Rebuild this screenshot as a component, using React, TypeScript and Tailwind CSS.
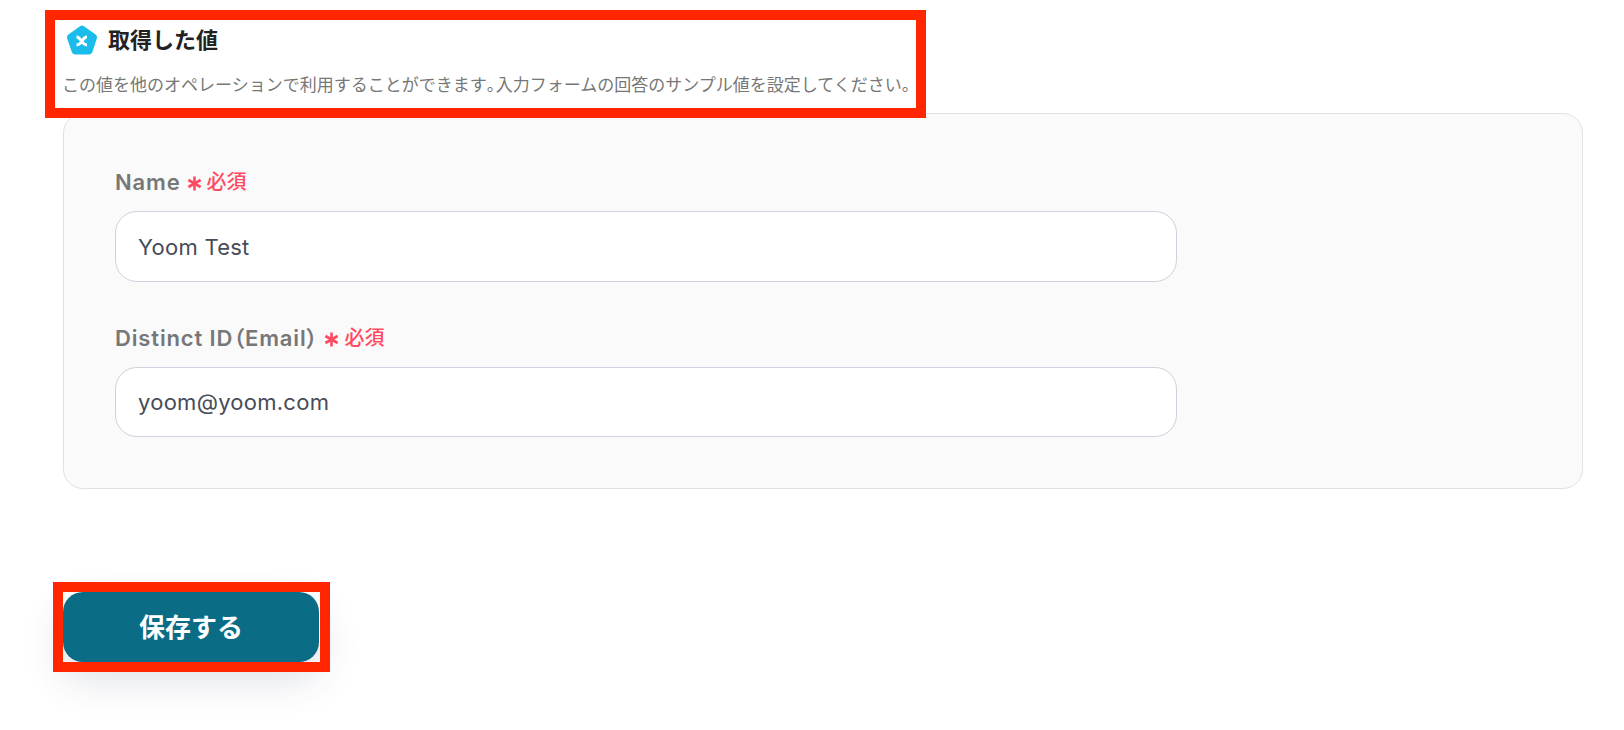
const font = "font-['Inter','Noto_Sans_CJK_JP',sans-serif]";

function RequiredMark() {
  return (
    <span className="ml-[6px] flex items-center tracking-normal text-[#ff4a62]">
      <svg width="15" height="15" viewBox="0 0 15 15" className="mt-[2px]" fill="none" stroke="currentColor" strokeWidth="2.6">
        <path d="M7.5 0.5V14.5M1.4 4L13.6 11M13.6 4L1.4 11" />
      </svg>
      <span className="ml-[5px] text-[20px] font-medium">必須</span>
    </span>
  );
}

function Field({ label, value, className }: { label: string; value: string; className: string }) {
  return (
    <div>
      <div className="flex h-[28px] items-center text-[22px] font-semibold leading-[28px] tracking-[0.85px] text-[#777777] [font-feature-settings:'palt']">
        <span>{label}</span>
        <RequiredMark />
      </div>
      <div className={`mt-[15px] flex w-[1062px] items-center rounded-[22px] border border-[#cfd1dc] bg-white pl-[22px] text-[22px] tracking-[0.26px] text-[#474c58] ${className}`}>
        {value}
      </div>
    </div>
  );
}

export default function App() {
  return (
    <div className={`relative h-[730px] w-full overflow-hidden bg-white pl-[63px] pr-[41px] pt-[20px] ${font}`}>
      {/* HEADING */}
      <div className="flex h-[40px] items-center pl-[3px]">
        <svg width="32" height="31" viewBox="0 0 32 31" className="mt-[1px]">
          <path d="M14 1.2a3.4 3.4 0 0 1 4 0l11.6 8.4a3.4 3.4 0 0 1 1.2 3.8l-4.4 13.6a3.4 3.4 0 0 1-3.2 2.4H9a3.4 3.4 0 0 1-3.2-2.4L1.2 13.4a3.4 3.4 0 0 1 1.2-3.8z" fill="#1abcec" />
          <path d="M10.5 12c2.5 0 3.5 1.7 5 4s3 4 5.5 4M21 12c-2.5 0-3.5 1.7-5 4s-3 4-5.5 4" stroke="#fff" strokeWidth="2.8" fill="none" />
        </svg>
        <h2 className="ml-[10px] text-[22px] font-bold text-[#222222]">取得した値</h2>
      </div>
      <p className="-ml-[1px] mt-[13px] whitespace-nowrap text-[17px] leading-[24px] text-[#777777]">
        この値を他のオペレーションで利用することができます<span className="tracking-[-8px]">。</span>入力フォームの回答のサンプル値を設定してください。
      </p>

      {/* FORM CARD */}
      <div className="mt-[16px] h-[376px] rounded-[20px] border border-[#e0e1e6] bg-[#fafafb] pl-[51px] pt-[54px]">
        <Field label="Name" value="Yoom Test" className="h-[71px] pt-[1px]" />
        <div className="mt-[42px]">
          <Field label="Distinct ID（Email）" value="yoom@yoom.com" className="h-[70px]" />
        </div>
      </div>

      {/* SAVE */}
      <button className="mt-[103px] flex h-[70px] w-[256px] items-center justify-center rounded-[20px] bg-[#0a6c85] pt-[1px] text-[26px] font-semibold text-white shadow-[0_16px_40px_rgba(30,50,80,0.16)]">
        保存する
      </button>

      {/* ANNOTATIONS */}
      <div className="absolute left-[45px] top-[10px] h-[108px] w-[881px] border-[10px] border-[#ff2600]" />
      <div className="absolute left-[53px] top-[582px] h-[90px] w-[277px] border-[10px] border-[#ff2600]" />
    </div>
  );
}
